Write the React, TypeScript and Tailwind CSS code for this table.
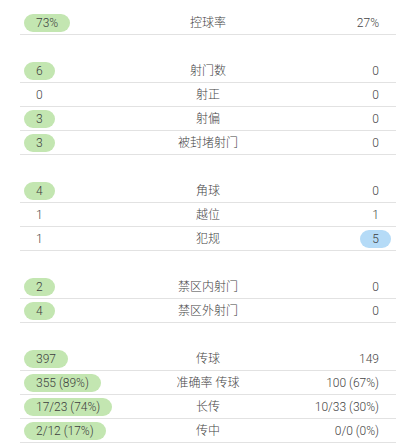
import React from "react";

type Row = { l: string; label: string; r: string; win?: "l" | "r" };

const groups: Row[][] = [
  [{ l: "73%", label: "控球率", r: "27%", win: "l" }],
  [
    { l: "6", label: "射门数", r: "0", win: "l" },
    { l: "0", label: "射正", r: "0" },
    { l: "3", label: "射偏", r: "0", win: "l" },
    { l: "3", label: "被封堵射门", r: "0", win: "l" },
  ],
  [
    { l: "4", label: "角球", r: "0", win: "l" },
    { l: "1", label: "越位", r: "1" },
    { l: "1", label: "犯规", r: "5", win: "r" },
  ],
  [
    { l: "2", label: "禁区内射门", r: "0", win: "l" },
    { l: "4", label: "禁区外射门", r: "0", win: "l" },
  ],
  [
    { l: "397", label: "传球", r: "149", win: "l" },
    { l: "355 (89%)", label: "准确率 传球", r: "100 (67%)", win: "l" },
    { l: "17/23 (74%)", label: "长传", r: "10/33 (30%)", win: "l" },
    { l: "2/12 (17%)", label: "传中", r: "0/0 (0%)", win: "l" },
  ],
];

function Pill({ v, bg }: { v: string; bg?: string }) {
  return (
    <span
      className={
        "inline-block h-[18px] rounded-full px-3 leading-[18px] whitespace-nowrap " +
        (bg === "g" ? "bg-[#c3e6b1] text-[#3d3d3d]" : bg === "b" ? "bg-[#b5dbf7] text-[#3d3d3d]" : "")
      }
    >
      {v}
    </span>
  );
}

export default function App() {
  return (
    <div
      className="w-[408px] h-[443px] bg-white pt-[11px] text-[12px] font-light text-[#444444]"
      style={{ fontFamily: "Roboto, 'Noto Sans CJK SC', sans-serif" }}
    >
      <div className="ml-[20px] w-[376px] flex flex-col gap-[24px]">
        {groups.map((g, gi) => (
          <div key={gi} className="flex flex-col">
            {g.map((r, ri) => (
              <div
                key={ri}
                className="grid grid-cols-[1fr_auto_1fr] items-center h-[24px] border-b border-[#e2e2e2]"
              >
                <div className="pl-[4px] flex">
                  <Pill v={r.l} bg={r.win === "l" ? "g" : undefined} />
                </div>
                <div className="text-center whitespace-nowrap">{r.label}</div>
                <div className="pr-[5px] flex justify-end">
                  <Pill v={r.r} bg={r.win === "r" ? "b" : undefined} />
                </div>
              </div>
            ))}
          </div>
        ))}
      </div>
    </div>
  );
}
